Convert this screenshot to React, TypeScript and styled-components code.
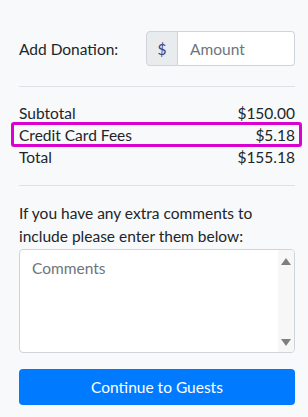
import React from "react";
import styled, { createGlobalStyle } from "styled-components";

const Global = createGlobalStyle`
  html, body { margin: 0; padding: 0; background: #f8f9fa; }
  body { font-family: Lato, "Liberation Sans", sans-serif; color: #212529; font-size: 15.5px; }
  * { box-sizing: border-box; }
`;

const Page = styled.div`
  padding: 31px 13px 11px 19px;
  display: flex;
  flex-direction: column;
`;

const DonationRow = styled.div`
  display: flex;
  align-items: center;
  height: 35px;
`;

const Label = styled.div`
  width: 127px;
  flex-shrink: 0;
  white-space: nowrap;
`;

const InputGroup = styled.div`
  display: flex;
  flex: 1;
  min-width: 0;
  height: 35px;
`;

const Addon = styled.div`
  width: 32px;
  flex-shrink: 0;
  display: flex;
  align-items: center;
  justify-content: center;
  background: #e9ecef;
  border: 1px solid #ced4da;
  border-radius: 4px 0 0 4px;
  color: #3f3f80;
`;

const Amount = styled.input`
  flex: 1;
  min-width: 0;
  width: 0;
  border: 1px solid #ced4da;
  border-left: none;
  border-radius: 0 4px 4px 0;
  background: #fff;
  padding: 0 12px;
  font: inherit;
  color: #495057;
  outline: none;
  &::placeholder { color: #6c757d; }
`;

const Rule = styled.hr<{ $top: number; $bottom: number }>`
  border: none;
  border-top: 1px solid #dee2e6;
  margin: ${(p) => p.$top}px 0 ${(p) => p.$bottom}px;
  height: 0;
`;

const SummaryRow = styled.div<{ $highlight?: boolean }>`
  position: relative;
  display: flex;
  justify-content: space-between;
  line-height: 22px;
  ${(p) =>
    p.$highlight &&
    `&::after {
      content: "";
      position: absolute;
      top: -2px;
      bottom: -1px;
      left: -8px;
      right: -7px;
      border: 3px solid #d900d0;
      border-radius: 3px;
      pointer-events: none;
    }`}
`;

const Note = styled.p`
  margin: 0 0 2px;
  line-height: 22.5px;
`;

const CommentBox = styled.div`
  display: flex;
  height: 104px;
  border: 1px solid #ced4da;
  border-radius: 4px;
  background: #fff;
  overflow: hidden;
`;

const Comments = styled.textarea`
  flex: 1;
  min-width: 0;
  resize: none;
  border: none;
  background: transparent;
  padding: 6px 12px;
  font: inherit;
  line-height: 24px;
  outline: none;
  overflow: hidden;
  &::placeholder { color: #6c757d; }
`;

const ScrollTrack = styled.div`
  width: 16px;
  flex-shrink: 0;
  background: #f7f7f7;
  display: flex;
  flex-direction: column;
  justify-content: space-between;
  align-items: center;
  padding: 8px 0 6px;
`;

const Arrow = ({ down }: { down?: boolean }) => (
  <svg width="10" height="7" viewBox="0 0 10 7">
    <polygon points={down ? "0,0 10,0 5,7" : "0,7 10,7 5,0"} fill="#7f7f7f" />
  </svg>
);

const Button = styled.button`
  margin-top: 16px;
  height: 36px;
  width: 100%;
  border: none;
  border-radius: 4px;
  background: #007bff;
  color: #fff;
  font: inherit;
`;

export default function App() {
  return (
    <>
      <Global />
      <Page>
        <DonationRow>
          <Label>Add Donation:</Label>
          <InputGroup>
            <Addon>$</Addon>
            <Amount placeholder="Amount" />
          </InputGroup>
        </DonationRow>
        <Rule $top={20} $bottom={15} />
        <SummaryRow>
          <span>Subtotal</span>
          <span>$150.00</span>
        </SummaryRow>
        <SummaryRow $highlight>
          <span>Credit Card Fees</span>
          <span>$5.18</span>
        </SummaryRow>
        <SummaryRow>
          <span>Total</span>
          <span>$155.18</span>
        </SummaryRow>
        <Rule $top={17} $bottom={16} />
        <Note>If you have any extra comments to include please enter them below:</Note>
        <CommentBox>
          <Comments placeholder="Comments" />
          <ScrollTrack>
            <Arrow />
            <Arrow down />
          </ScrollTrack>
        </CommentBox>
        <Button>Continue to Guests</Button>
      </Page>
    </>
  );
}
